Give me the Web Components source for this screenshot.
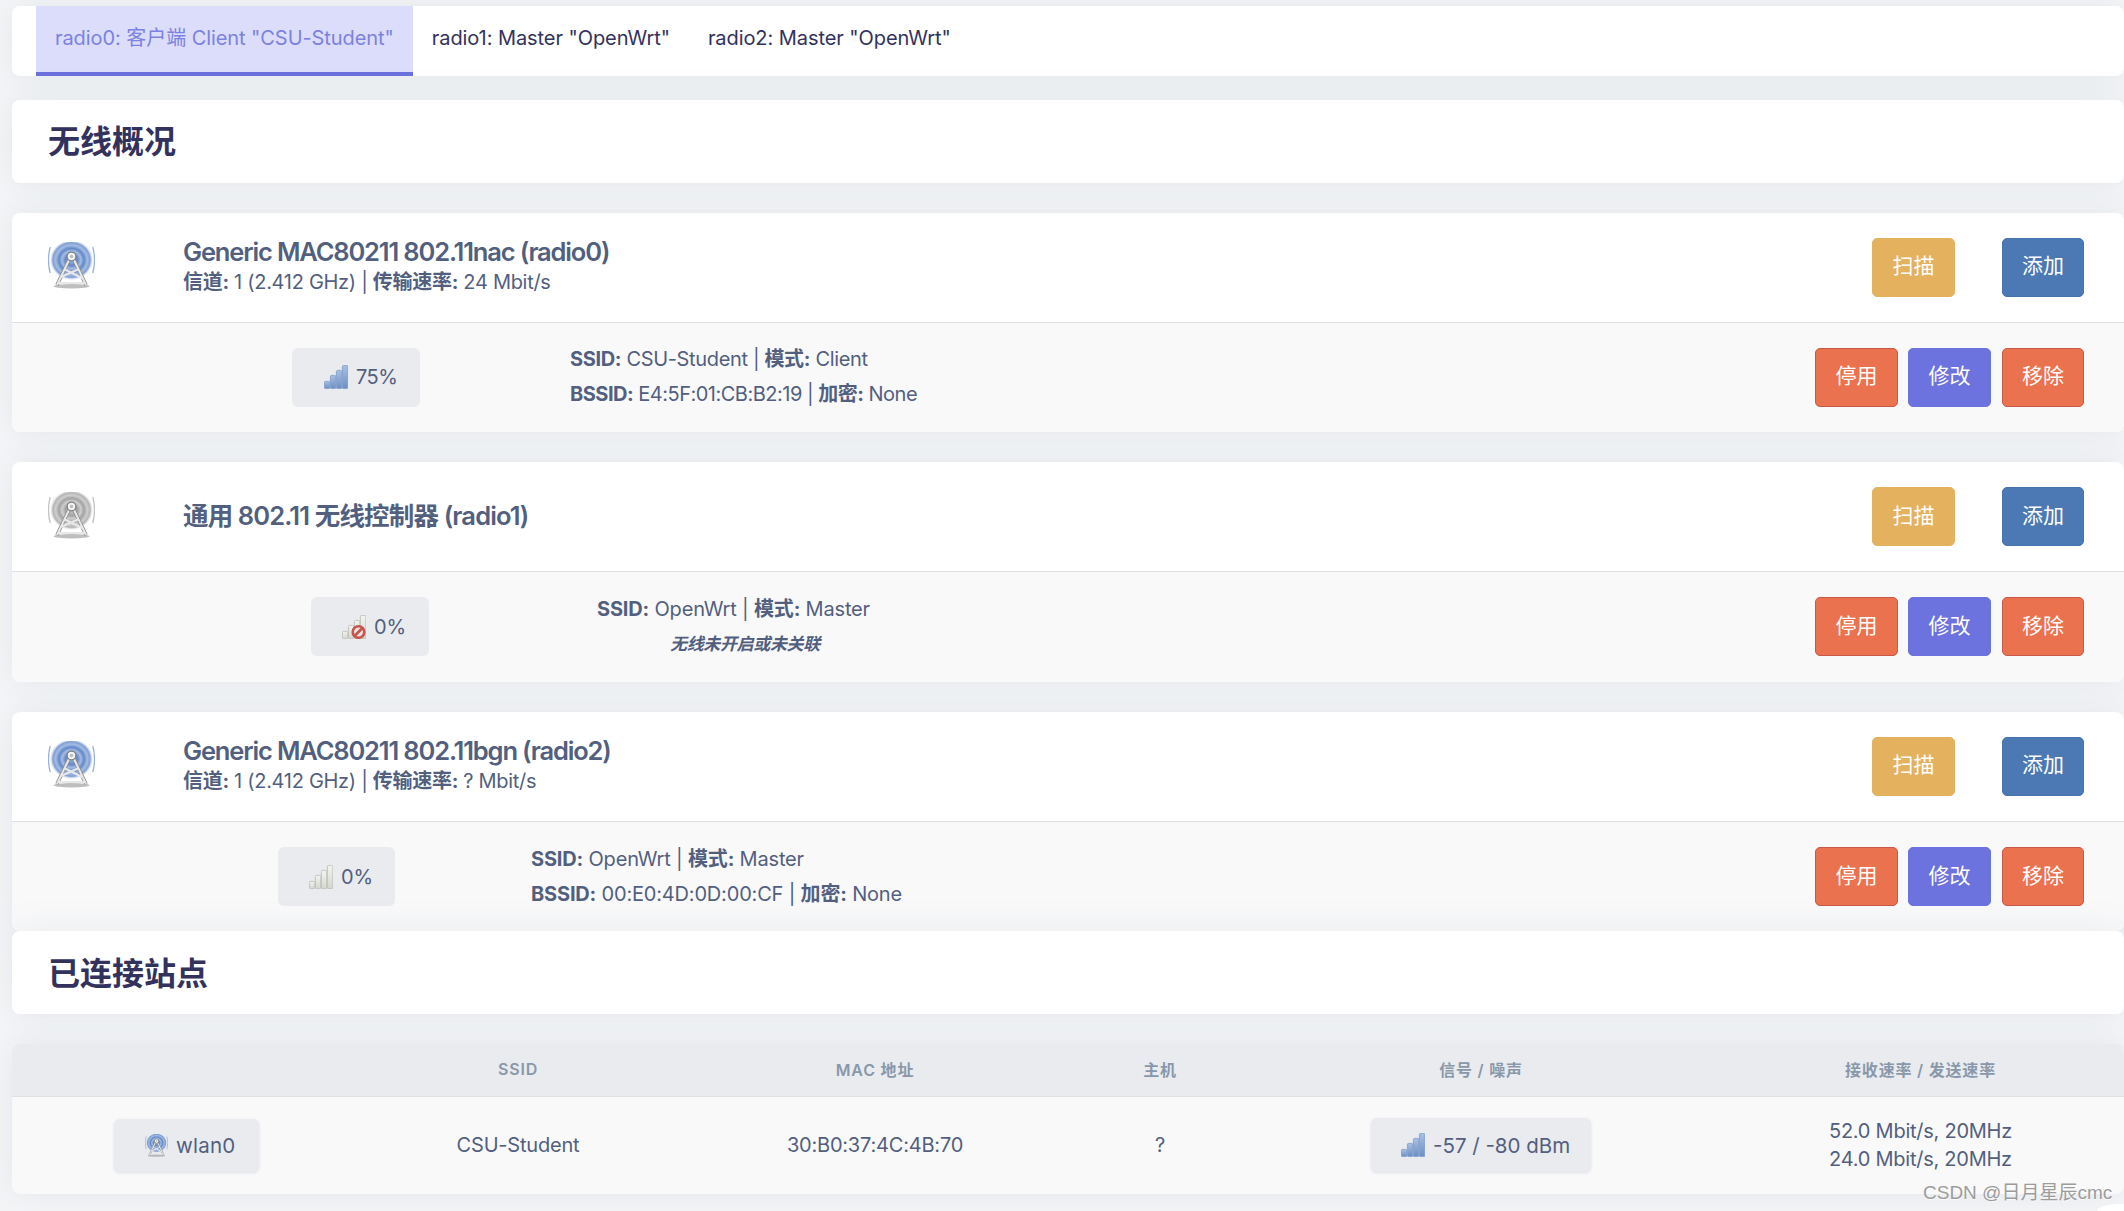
<!DOCTYPE html>
<html lang="zh"><head><meta charset="utf-8">
<style>
html,body{margin:0;padding:0;background:#f4f5f7;overflow:hidden}
body{width:2124px;height:1211px;position:relative;font-family:Inter,"Noto Sans CJK SC",sans-serif;color:#525f7f;font-size:20px}
main{display:flex;flex-direction:column;padding:6px 0 0 12px;box-sizing:border-box;width:2124px}
.note{display:block;margin-left:73px;font-size:17px;font-weight:700;font-style:italic}
.tight{letter-spacing:-.5px}
.wide{letter-spacing:-.18px}
</style></head><body>
<main>
<x-tabs>
 <x-tab active>radio0: 客户端 Client "CSU-Student"</x-tab>
 <x-tab>radio1: Master "OpenWrt"</x-tab>
 <x-tab>radio2: Master "OpenWrt"</x-tab>
</x-tabs>
<x-heading>无线概况</x-heading>
<x-radio-card h="219.6" tone="blue" gap="150" pad="280" bw="128" bp="32" bl="-.5" signal="blue" pct="75%" name="Generic MAC80211 802.11nac (radio0)" sub="y">
 <span slot="sub"><b>信道:</b> 1 (2.412 GHz) | <b>传输速率:</b> 24 Mbit/s</span>
 <span slot="l1"><b>SSID:</b> CSU-Student | <b>模式:</b> Client</span>
 <span slot="l2" class="tight"><b>BSSID:</b> E4:5F:01:CB:B2:19 | <b>加密:</b> None</span>
</x-radio-card>
<x-radio-card h="219.6" tone="grey" gap="168" pad="299" bw="118" bp="31" signal="off" pct="0%" nl="-.85" name="通用 802.11 无线控制器 (radio1)">
 <span slot="l1" class="wide"><b>SSID:</b> OpenWrt | <b>模式:</b> Master</span>
 <em slot="l2" class="note">无线未开启或未关联</em>
</x-radio-card>
<x-radio-card h="219.6" tone="blue" gap="136" pad="266" bw="117" bp="31" signal="grey" pct="0%" name="Generic MAC80211 802.11bgn (radio2)" sub="y" last>
 <span slot="sub"><b>信道:</b> 1 (2.412 GHz) | <b>传输速率:</b> ? Mbit/s</span>
 <span slot="l1" class="wide"><b>SSID:</b> OpenWrt | <b>模式:</b> Master</span>
 <span slot="l2" class="wide"><b>BSSID:</b> 00:E0:4D:0D:00:CF | <b>加密:</b> None</span>
</x-radio-card>
<x-heading>已连接站点</x-heading>
<x-stations></x-stations>
</main>
<x-watermark>CSDN @日月星辰cmc</x-watermark>
<x-corner></x-corner>
<script>
let uid=0;
function towerSVG(tone,size){
  const id='g'+(++uid);
  const c=tone==='blue'?['#6488c8','#a3bde4','#dbe5f5']:['#a3a3a3','#cfcfcf','#ececec'];
  return `<svg width="${size}" height="${size}" viewBox="0 0 47 47" aria-hidden="true">
  <defs><radialGradient id="${id}" cx="50%" cy="50%" r="50%">
   <stop offset="0" stop-color="${c[1]}"/><stop offset=".28" stop-color="${c[0]}"/><stop offset=".44" stop-color="${c[1]}"/><stop offset=".58" stop-color="${c[0]}"/><stop offset=".74" stop-color="${c[1]}"/><stop offset=".87" stop-color="${c[0]}" stop-opacity=".8"/><stop offset="1" stop-color="${c[2]}" stop-opacity=".15"/>
  </radialGradient></defs>
  <ellipse cx="23.5" cy="18" rx="21.5" ry="20" fill="url(#${id})"/>
  <path d="M2.2 5Q-1.2 18 2.2 31M44.8 5Q48.2 18 44.8 31" fill="none" stroke="${c[0]}" stroke-width="1.3" opacity=".65"/>
  <path d="M21 18 9 43M26 18 38 43" stroke="#8c8c8c" stroke-width="3.6" fill="none"/>
  <path d="M21 18 9 43M26 18 38 43M13 35 31 27M16 27 34 36M10 41H37" stroke="#e8e8e8" stroke-width="2" fill="none"/>
  <ellipse cx="23.5" cy="44.3" rx="18" ry="2.2" fill="#9b9b9b" opacity=".65"/>
  <circle cx="23.5" cy="14.5" r="4.4" fill="#f4f4f4" stroke="#7f7f7f" stroke-width="1.3"/>
  <circle cx="23.5" cy="14.5" r="1.8" fill="#bdbdbd"/></svg>`;
}
function barsSVG(kind){
  const blue=kind==='blue';
  const id='b'+(++uid);
  const a=blue?'#a9c0e2':'#f3f4ef', b=blue?'#6d8fc4':'#d3d6ce', s=blue?'#7c9acb':'#b8bbb3';
  const bars=[[0,16,6,8],[6,10,6,14],[12,5,6,19],[18,0,6,24]];
  const offs=kind==='off'?`<circle cx="16.5" cy="17" r="5.8" fill="#e6e2de" stroke="#c8544d" stroke-width="2.6"/><path d="M12.5 21 20.5 13" stroke="#c8544d" stroke-width="2.6"/>`:'';
  return `<svg width="24" height="24" viewBox="0 0 24 24" aria-hidden="true">
  <defs><linearGradient id="${id}" x1="0" x2="0" y1="0" y2="1"><stop offset="0" stop-color="${a}"/><stop offset="1" stop-color="${b}"/></linearGradient></defs>
  ${bars.map(r=>`<rect x="${r[0]+.4}" y="${r[1]+.4}" width="${r[2]-.6}" height="${r[3]-.8}" rx="1.2" fill="url(#${id})" stroke="${s}" stroke-width=".8"/>`).join('')}
  ${offs}</svg>`;
}
function def(name,render){
  customElements.define(name,class extends HTMLElement{
    constructor(){super();this.attachShadow({mode:'open'})}
    connectedCallback(){this.shadowRoot.innerHTML=render(this)}
  });
}
const CARD='background:#fff;border-radius:8px;box-shadow:0 0 32px 0 rgba(136,152,170,.15);';
def('x-tabs',()=>`<style>:host{display:flex;box-sizing:border-box;height:70px;padding-left:24px;margin-bottom:24px;${CARD}}</style><slot></slot>`);
def('x-tab',()=>`<style>:host{display:flex;align-items:center;box-sizing:border-box;height:70px;padding:0 19px 3px;font-size:20px;line-height:28px;letter-spacing:-.07px;color:#32325d;border-bottom:4px solid transparent;white-space:pre}
:host([active]){background:#dcddfa;color:#7b82e0;border-bottom-color:#6b70dc}</style><slot></slot>`);
def('x-heading',()=>`<style>:host{display:flex;align-items:center;box-sizing:border-box;height:82.6px;padding:0 0 4px 36px;margin-bottom:30px;${CARD}font-size:32px;font-weight:700;color:#32325d}</style><slot></slot>`);
def('x-btn',h=>{
  const k=h.getAttribute('k');
  const m={scan:['#e4b15f','#e4b15f'],add:['#4c78b4','#4672ad'],stop:['#ea724e','#c9584a'],edit:['#6c72de','#6c72de'],rm:['#ea724e','#c9584a']}[k];
  return `<style>:host{display:flex;align-items:center;justify-content:center;box-sizing:border-box;width:${h.getAttribute('w')||83}px;height:59px;padding-bottom:6px;background:${m[0]};border:1px solid ${m[1]};border-radius:5px;color:#fff;font-size:21px;font-family:"Noto Sans CJK SC",sans-serif;font-weight:400}</style><slot></slot>`});
def('x-tower',h=>`<style>:host{display:block;width:${h.getAttribute('s')}px;height:${h.getAttribute('s')}px;line-height:0}</style>${towerSVG(h.getAttribute('tone'),h.getAttribute('s'))}`);
def('x-bars',h=>`<style>:host{display:block;width:24px;height:24px;line-height:0}</style>${barsSVG(h.getAttribute('kind'))}`);
def('x-badge',h=>`<style>:host{display:inline-flex;align-items:center;gap:8px;box-sizing:border-box;width:${h.getAttribute('w')}px;height:${h.getAttribute('h')||59}px;padding:0 0 0 ${h.getAttribute('px')||32}px;background:#e9ebef;border-radius:6px;color:#525f7f;font-size:${h.getAttribute('fs')||20}px;letter-spacing:${h.getAttribute('ls')||0}px;white-space:pre;${h.hasAttribute('raised')?'box-shadow:0 1px 3px rgba(136,152,170,.25);':''}}
 ::slotted(*){flex:none}</style><slot></slot>`);
def('x-radio-card',h=>{
  const a=n=>h.getAttribute(n);
  return `<style>
  :host{display:flex;flex-direction:column;box-sizing:border-box;height:${a('h')}px;margin-bottom:${h.hasAttribute('last')?0:30}px;${CARD}overflow:hidden}
  .hd{flex:0 0 110px;display:flex;align-items:center;box-sizing:border-box;padding:0 40px 0 36px;border-bottom:1px solid #dee0e4}
  x-tower{margin-top:-3px}
  .ti{flex:1;margin-left:88px;display:flex;flex-direction:column}
  .name{font-size:25.5px;font-weight:600;letter-spacing:${a('nl')||-1.16}px;line-height:30px;color:#525f7f;white-space:pre;${a('sub')?'':'padding-bottom:2px;'}}
  .sub{font-size:20px;line-height:30px;letter-spacing:-.3px;white-space:pre}
  .btns{display:flex;gap:47px}
  .row{flex:1;display:flex;align-items:center;background:#f9f9fa;padding:0 40px 0 ${a('pad')}px}
  .info{margin-left:${a('gap')}px;font-size:20px;letter-spacing:-.35px;white-space:pre;line-height:35px}
  .spacer{flex:1}
  .acts{display:flex}
  </style>
  <div class="hd"><x-tower tone="${a('tone')}" s="47"></x-tower>
   <div class="ti"><div class="name">${a('name')}</div>${a('sub')?'<div class="sub"><slot name="sub"></slot></div>':''}</div>
   <div class="btns"><x-btn k="scan">扫描</x-btn><x-btn k="add" w="82">添加</x-btn></div></div>
  <div class="row"><x-badge w="${a('bw')}" px="${a('bp')}" ls="${a('bl')||0}"><x-bars kind="${a('signal')}"></x-bars>${a('pct')}</x-badge>
   <div class="info"><div><slot name="l1"></slot></div><div><slot name="l2"></slot></div></div>
   <div class="spacer"></div>
   <div class="acts"><x-btn k="stop">停用</x-btn><x-btn k="edit" style="margin:0 11px 0 10px">修改</x-btn><x-btn k="rm" w="82">移除</x-btn></div></div>`;
});
def('x-stations',()=>`<style>
 :host{display:block;background:#f9f9fa;border-radius:8px;overflow:hidden;box-shadow:0 0 32px 0 rgba(136,152,170,.15)}
 .g{display:grid;grid-template-columns:349px 314px 400px 170px 472px 1fr;text-align:center;align-items:center;justify-items:center}
 .h{box-sizing:border-box;height:53px;padding-bottom:2px;background:#e9ebef;border-bottom:1px solid #dee0e4;color:#8898aa;font-size:16px;font-weight:600;letter-spacing:.8px}
 .r{height:97px;font-size:20px;letter-spacing:-.2px}
 .rate{line-height:28px;white-space:pre;padding-bottom:1px;letter-spacing:-.25px}
</style>
<div class="g h"><span></span><span>SSID</span><span>MAC 地址</span><span>主机</span><span>信号 / 噪声</span><span>接收速率 / 发送速率</span></div>
<div class="g r"><x-badge w="145" h="53" px="31" fs="20.5" ls=".25" raised><x-tower tone="blue" s="23"></x-tower>wlan0</x-badge><span>CSU-Student</span><span>30:B0:37:4C:4B:70</span><span>?</span><x-badge w="220" h="54" px="30" fs="20.5" raised><x-bars kind="blue"></x-bars>-57 / -80 dBm</x-badge><div class="rate">52.0 Mbit/s, 20MHz
24.0 Mbit/s, 20MHz</div></div>`);
def('x-watermark',()=>`<style>:host{position:absolute;left:1923px;top:1182px;font-size:19px;line-height:22px;color:#9c9c9c;text-shadow:0 1px 1px rgba(255,255,255,.7);font-family:"Liberation Sans","Noto Sans CJK SC",sans-serif;white-space:pre}</style><slot></slot>`);
def('x-corner',()=>`<style>:host{position:absolute;right:0;bottom:0;width:27px;height:7px;background:#fff;border-top-left-radius:24px 7px}</style>`);
</script>
</body></html>
